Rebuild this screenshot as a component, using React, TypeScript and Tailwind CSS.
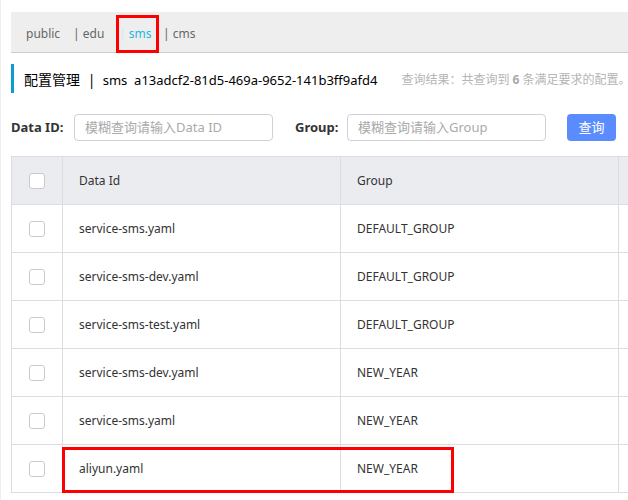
const rows = [
  { id: 'service-sms.yaml', group: 'DEFAULT_GROUP' },
  { id: 'service-sms-dev.yaml', group: 'DEFAULT_GROUP' },
  { id: 'service-sms-test.yaml', group: 'DEFAULT_GROUP' },
  { id: 'service-sms-dev.yaml', group: 'NEW_YEAR' },
  { id: 'service-sms.yaml', group: 'NEW_YEAR' },
  { id: 'aliyun.yaml', group: 'NEW_YEAR' },
]

function Checkbox() {
  return <span className="block h-4 w-4 rounded-[3px] border border-[#c8cad0] bg-white" />
}

export default function App() {
  return (
    <div
      className="h-[500px] w-[628px] overflow-hidden border-l border-[#eceef2] bg-white text-[#333]"
      style={{ fontFamily: '"Noto Sans", "Noto Sans CJK SC", sans-serif' }}
    >
      {/* namespace tabs */}
      <div className="relative ml-[10px] mt-[12px] flex h-[41px] items-center border-b border-[#ccc] bg-[#eee] pt-[3px] text-[12px] text-[#666]">
        <span className="ml-[15px] w-[47px]">public</span>
        <span className="w-[46px]">| edu</span>
        <span className="w-[44px] text-[#1fb6e0]">
          <span className="text-[#cde9f3]">|</span> sms
        </span>
        <span>| cms</span>
        <div className="absolute left-[105px] top-[3px] h-[38px] w-[43px] border-[3px] border-[#f00]" />
      </div>

      {/* title */}
      <div className="ml-[10px] mt-[11px] flex h-[29px] items-center whitespace-nowrap border-l-[3px] border-[#0d9bd3] pl-[10px] pt-[2px]">
        <span className="flex-none text-[14px] text-black">
          配置管理 <span className="mx-[4px]">|</span>
          <span className="text-[13px]"> sms&nbsp; a13adcf2-81d5-469a-9652-141b3ff9afd4</span>
        </span>
        <span className="ml-[24px] flex-none text-[12px] text-[#b5b5b5]">
          查询结果：共查询到 <b className="text-[#aaa]">6</b> 条满足要求的配置。
        </span>
      </div>

      {/* search form */}
      <div className="ml-[10px] mt-[21px] flex h-[27px] items-center text-[13px]">
        <label className="w-[63px] font-bold text-[#333]">Data ID:</label>
        <div className="flex h-[27px] w-[199px] items-center rounded-[4px] border border-[#cfd1d7] px-[10px] text-[#aaa]">
          模糊查询请输入Data ID
        </div>
        <label className="ml-[22px] w-[52px] font-bold text-[#333]">Group:</label>
        <div className="flex h-[27px] w-[199px] items-center rounded-[4px] border border-[#cfd1d7] px-[10px] text-[#aaa]">
          模糊查询请输入Group
        </div>
        <button className="ml-[21px] h-[27px] w-[49px] rounded-[4px] bg-[#5a8cff] text-[13px] text-white">查询</button>
      </div>

      {/* table */}
      <div className="ml-[10px] mt-[15px] w-[720px] border-l border-t border-[#dcdde2] text-[12px]">
        <div className="flex h-[48px] bg-[#ebecf0]">
          <div className="flex w-[51px] items-center justify-center border-b border-r border-[#dcdde2]">
            <Checkbox />
          </div>
          <div className="flex w-[278px] items-center border-b border-r border-[#dcdde2] pl-[16px]">Data Id</div>
          <div className="flex w-[278px] items-center border-b border-r border-[#dcdde2] pl-[16px]">Group</div>
          <div className="flex-1 border-b border-[#dcdde2]" />
        </div>
        {rows.map((r, i) => (
          <div key={i} className="relative flex h-[48px]">
            <div className="flex w-[51px] items-center justify-center border-b border-r border-[#dcdde2]">
              <Checkbox />
            </div>
            <div className="flex w-[278px] items-center border-b border-r border-[#dcdde2] pl-[16px]">{r.id}</div>
            <div className="flex w-[278px] items-center border-b border-r border-[#dcdde2] pl-[16px]">{r.group}</div>
            <div className="flex-1 border-b border-[#dcdde2]" />
            {i === rows.length - 1 && (
              <div className="absolute left-[50px] top-[2px] h-[46px] w-[392px] border-[3px] border-[#f00]" />
            )}
          </div>
        ))}
      </div>
    </div>
  )
}
